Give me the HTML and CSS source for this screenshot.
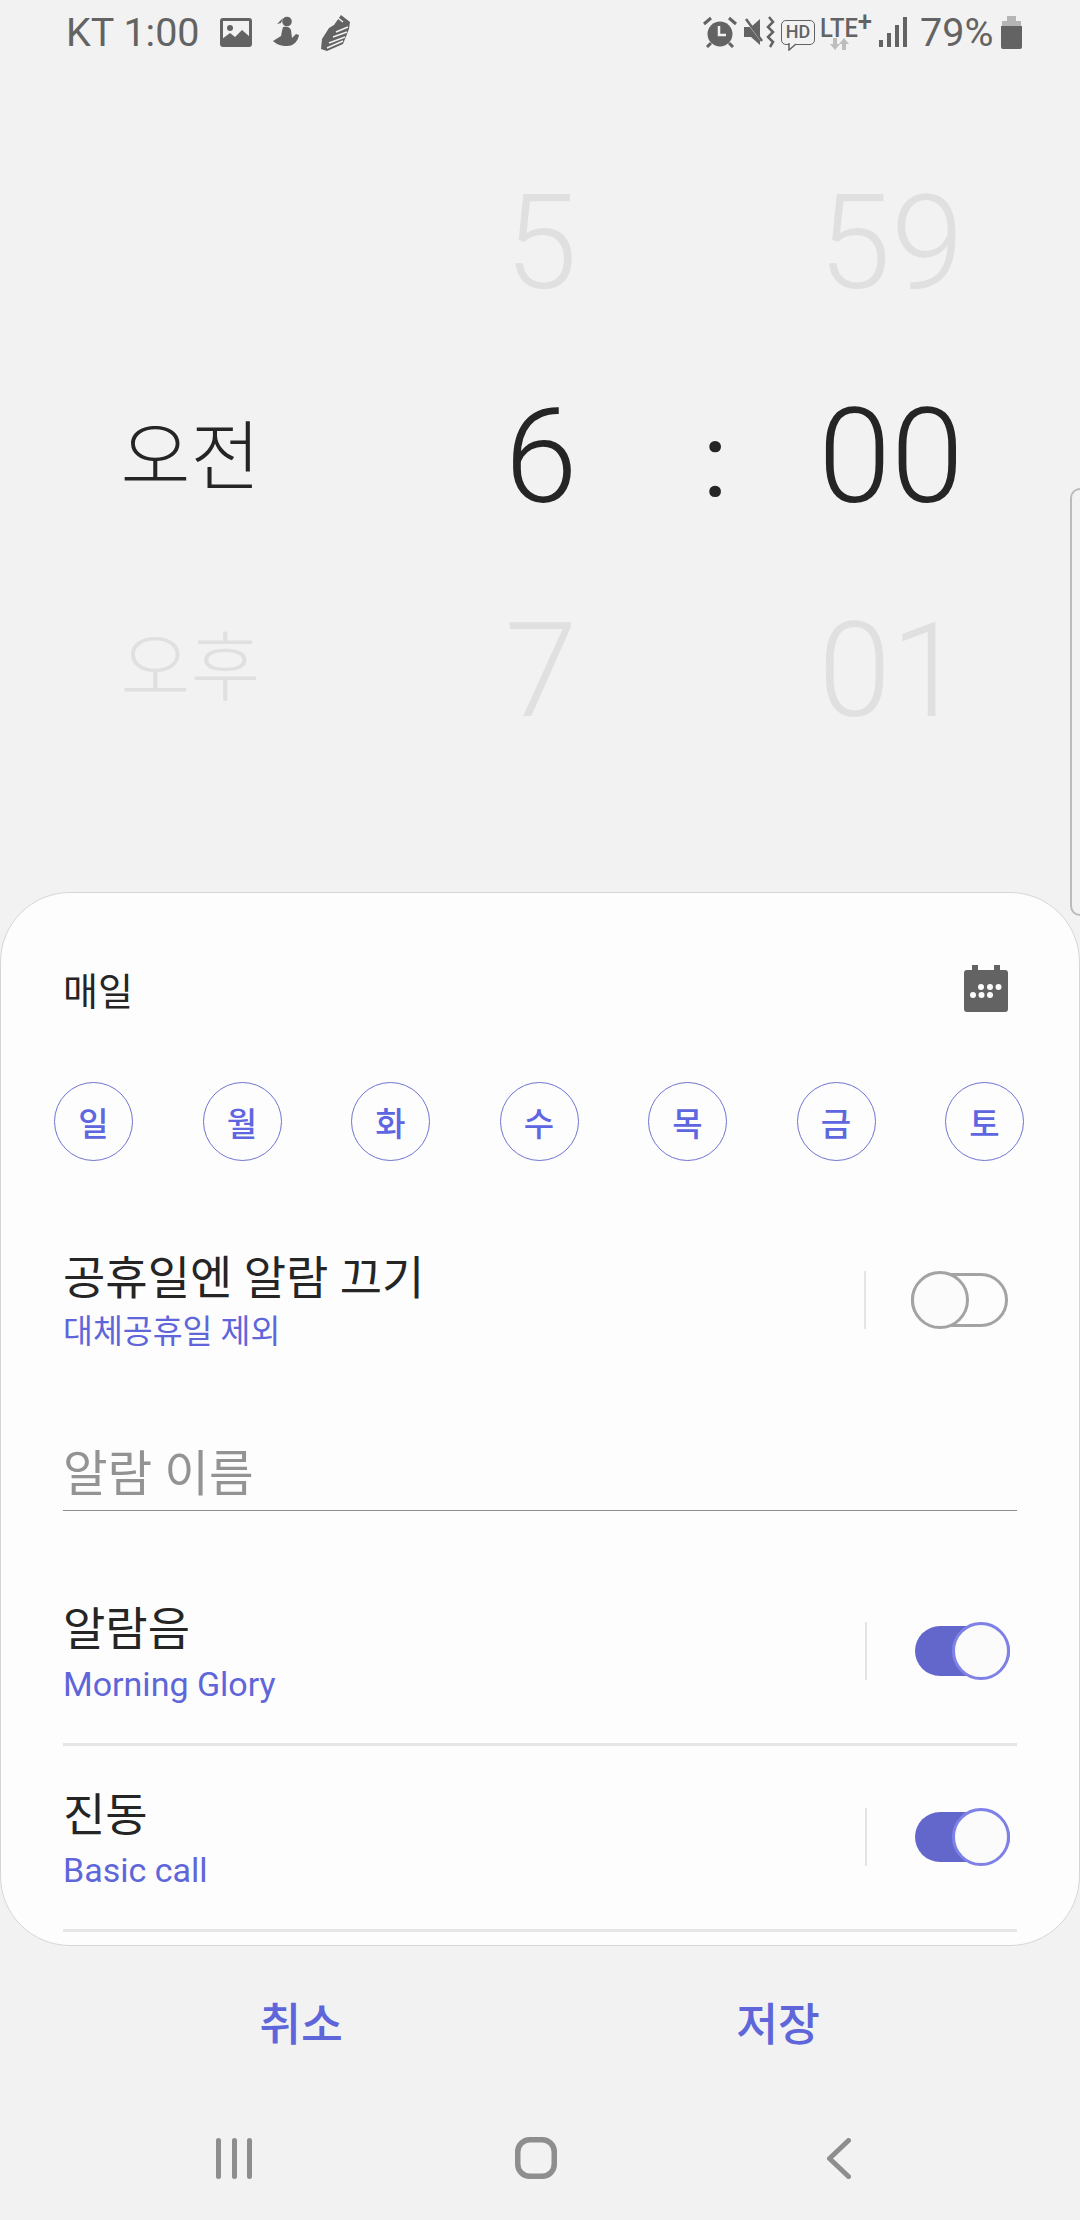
FILE: index.html
```html
<!doctype html>
<html lang="ko">
<head>
<meta charset="utf-8">
<meta name="viewport" content="width=device-width, initial-scale=1.0">
<link rel="stylesheet" href="styles.css">
<title>알람 편집</title>
</head>
<body>
<div class="screen">

<div class="status">
  <span class="status-time">KT 1:00</span>
  <svg class="ic-image" viewBox="0 0 32 29"><rect x="1.5" y="1.5" width="29" height="26" rx="1.5" fill="none" stroke="#636363" stroke-width="3"/><circle cx="10" cy="10" r="3" fill="#636363"/><path d="M2 27V21L10 15L15 19L22 12L30 19V27Z" fill="#636363"/></svg>
  <svg class="ic-person" viewBox="0 0 27 32"><circle cx="14" cy="5.500" r="4.800" fill="#636363"/><path d="M10 2L4 8L8 7Z" fill="#636363"/><path d="M10 11C14 10 17 11 18 14L19 22L23 18L26 19C25 25 21 30 14 30C8 30 3 28 0 25L8 20L9 15Z" fill="#636363"/></svg>
  <svg class="ic-shoe" viewBox="0 0 30 37"><path d="M20 1L29 8L28 15L22 30L6 37L0 35L1 25L8 14L13 11Z" fill="#636363"/><path d="M27 13L15 18M26 18L12 23M24 23L8 29M22 27L6 34M17 4L22 8" stroke="#f2f2f2" stroke-width="1.500" fill="none"/></svg>
  <span class="status-gap"></span>
  <svg class="ic-alarm" viewBox="0 0 34 32"><circle cx="17" cy="18" r="12.500" fill="#636363"/><path d="M16 10V19H23" stroke="#f2f2f2" stroke-width="2.500" fill="none"/><path d="M1 8L8 2M33 8L26 2" stroke="#636363" stroke-width="3"/><path d="M8 27L4 31M26 27L30 31" stroke="#636363" stroke-width="3"/></svg>
  <svg class="ic-mute" viewBox="0 0 32 32"><path d="M1 11H8L17 3V29L8 21H1Z" fill="#636363"/><path d="M2 3L20 27" stroke="#f2f2f2" stroke-width="2"/><path d="M3 3L19 25" stroke="#636363" stroke-width="2.500"/><path d="M26 1L30 6L25 11L30 16L25 21L30 26L27 31" stroke="#636363" stroke-width="2.500" fill="none"/></svg>
  <span class="hd-badge"><span class="hd-text">HD</span><svg class="hd-tail" viewBox="0 0 12 8"><path d="M1 0V7L8 1" fill="#f2f2f2" stroke="#636363" stroke-width="1.500"/></svg></span>
  <span class="lte">
    <span class="lte-text">LTE<span class="lte-plus">+</span></span>
    <svg class="lte-arrows" viewBox="0 0 20 14"><path d="M6 13L1 7H4V1H8V7H11Z M15 1L20 7H17V13H13V7H10Z" fill="#bdbdbd"/></svg>
  </span>
  <svg class="ic-signal" viewBox="0 0 28 30"><rect x="0" y="23" width="4" height="7" fill="#636363"/><rect x="8" y="16" width="4" height="14" fill="#636363"/><rect x="16" y="8" width="4" height="22" fill="#636363"/><rect x="24" y="0" width="4" height="30" fill="#636363"/></svg>
  <span class="status-batt">79%</span>
  <svg class="ic-battery" viewBox="0 0 21 33"><path d="M6 0H15V5H6Z" fill="#b5b5b5"/><path d="M1 5H20V10H1Z" fill="#b5b5b5"/><path d="M0 10H21V31Q21 33 19 33H2Q0 33 0 31Z" fill="#636363"/></svg>
</div>

<div class="picker">
  <div class="cell cell-ampm faint"></div>
  <div class="cell digit faint">5</div>
  <div class="cell"></div>
  <div class="cell digit faint">59</div>

  <div class="cell cell-ampm">오전</div>
  <div class="cell digit">6</div>
  <div class="cell colon">:</div>
  <div class="cell digit">00</div>

  <div class="cell cell-ampm cell-pm faint">오후</div>
  <div class="cell digit faint">7</div>
  <div class="cell"></div>
  <div class="cell digit faint">01</div>
</div>

<div class="edge-handle"></div>

<div class="card">
  <div class="card-head">
    <span class="card-date">매일</span>
    <svg class="ic-cal" viewBox="0 0 44 47"><path d="M8 0H14V5H30V0H36V5H41Q44 5 44 8V44Q44 47 41 47H3Q0 47 0 44V8Q0 5 3 5H8Z" fill="#636363"/><g fill="#fdfdfd"><circle cx="17" cy="22" r="3"/><circle cx="26" cy="22" r="3"/><circle cx="34.500" cy="22" r="3"/><circle cx="9" cy="30" r="3"/><circle cx="17.500" cy="30" r="3"/><circle cx="26" cy="30" r="3"/></g></svg>
  </div>

  <div class="days">
    <span class="day">일</span>
    <span class="day">월</span>
    <span class="day">화</span>
    <span class="day">수</span>
    <span class="day">목</span>
    <span class="day">금</span>
    <span class="day">토</span>
  </div>

  <div class="row row-holiday">
    <div class="row-text">
      <div class="row-title">공휴일엔 알람 끄기</div>
      <div class="row-sub row-sub-ko">대체공휴일 제외</div>
    </div>
    <span class="row-divider"></span>
    <span class="switch switch-off"><span class="knob"></span></span>
  </div>

  <div class="name-field">알람 이름</div>

  <div class="row row-sound">
    <div class="row-text">
      <div class="row-title">알람음</div>
      <div class="row-sub">Morning Glory</div>
    </div>
    <span class="row-divider"></span>
    <span class="switch switch-on"><span class="knob"></span></span>
  </div>

  <div class="row row-vibe">
    <div class="row-text">
      <div class="row-title">진동</div>
      <div class="row-sub">Basic call</div>
    </div>
    <span class="row-divider"></span>
    <span class="switch switch-on"><span class="knob"></span></span>
  </div>
</div>

<div class="actions">
  <span class="action">취소</span>
  <span class="action">저장</span>
</div>

<div class="nav">
  <svg class="nav-recent" viewBox="0 0 36 41"><path d="M2.500 2.500V38.500M18.500 2.500V38.500M33.500 2.500V38.500" stroke="#8e8e8e" stroke-width="5" stroke-linecap="round"/></svg>
  <svg class="nav-home" viewBox="0 0 42 42"><rect x="2.750" y="2.750" width="36.500" height="36.500" rx="12" fill="none" stroke="#8e8e8e" stroke-width="5.500"/></svg>
  <svg class="nav-back" viewBox="0 0 24 41"><path d="M21.500 2.500L2.500 20.500L21.500 38.500" fill="none" stroke="#8e8e8e" stroke-width="5" stroke-linecap="round" stroke-linejoin="round"/></svg>
</div>

</div>
</body>
</html>
```

FILE: styles.css
```css
* {
    box-sizing: border-box;
}
html, body {
    margin: 0;
    padding: 0;
}
body {
    font-family: Roboto, "Noto Sans CJK KR", sans-serif;
    background-color: #f2f2f2;
    color: #252525;
}
svg {
    display: block;
    flex: none;
}
.screen {
    position: relative;
    width: 1080px;
    height: 2220px;
    overflow: hidden;
}

/* status bar */
.status {
    display: flex;
    align-items: center;
    height: 64px;
    padding: 0 58px 0 66px;
    color: #636363;
}
.status-time {
    font-size: 39.500px;
    width: 154px;
    white-space: nowrap;
}
.status-gap {
    flex: 1;
}
.ic-image {
    width: 32px;
    height: 29px;
}
.ic-person {
    width: 27px;
    height: 32px;
    margin-left: 21px;
}
.ic-shoe {
    width: 30px;
    height: 37px;
    margin-left: 21px;
}
.ic-alarm {
    width: 34px;
    height: 32px;
}
.ic-mute {
    width: 32px;
    height: 32px;
    margin-left: 6px;
}
.hd-badge {
    position: relative;
    margin-left: 6px;
    width: 34px;
    height: 25px;
    border: 1.5px solid #636363;
    border-radius: 5px;
    display: flex;
    align-items: center;
    justify-content: center;
}
.hd-text {
    font-size: 18px;
    font-weight: 500;
    line-height: 1;
}
.hd-tail {
    position: absolute;
    left: 6px;
    bottom: -7px;
    width: 12px;
    height: 8px;
}
.lte {
    display: flex;
    flex-direction: column;
    margin-left: 5px;
    width: 52px;
    height: 46px;
}
.lte-text {
    font-size: 25px;
    font-weight: 500;
    line-height: 26px;
    height: 28px;
    transform: scaleX(0.95);
    transform-origin: left;
    white-space: nowrap;
}
.lte-plus {
    font-size: 27px;
    vertical-align: 6px;
}
.lte-arrows {
    width: 20px;
    height: 14px;
    margin-left: 9px;
}
.ic-signal {
    width: 28px;
    height: 30px;
    margin-left: 7px;
}
.status-batt {
    font-size: 39.500px;
    margin-left: 13px;
    width: 81px;
    white-space: nowrap;
}
.ic-battery {
    width: 21px;
    height: 33px;
}

/* time wheel */
.picker {
    display: grid;
    grid-template-columns: 376px 328px 22px 328px;
    grid-auto-rows: 214px;
    height: 828px;
    padding-top: 72px;
}
.cell {
    display: flex;
    align-items: center;
    justify-content: center;
    white-space: nowrap;
}
.cell-ampm {
    font-size: 76px;
    font-weight: 300;
    padding-bottom: 13px;
    padding-left: 5px;
}
.cell-pm {
    padding-bottom: 18px;
}
.digit {
    font-size: 131px;
    font-weight: 300;
    padding-left: 2px;
}
.colon {
    font-size: 104px;
    font-weight: 400;
    padding-top: 6px;
}
.faint {
    color: #e0e0e0;
}
.edge-handle {
    position: absolute;
    right: -12px;
    top: 488px;
    width: 22px;
    height: 428px;
    border: 2px solid #bcbcbc;
    border-radius: 10px;
}

/* card */
.card {
    position: relative;
    height: 1054px;
    background-color: #fdfdfd;
    border: 1.5px solid #d6d6d6;
    border-radius: 70px;
    padding: 0 62px;
}
.card-head {
    display: flex;
    align-items: center;
    justify-content: space-between;
    height: 60px;
    margin-top: 65px;
    padding-right: 9px;
}
.card-date {
    font-size: 38px;
}
.ic-cal {
    width: 44px;
    height: 47px;
}
.days {
    display: flex;
    justify-content: space-between;
    margin: 64px -7px 0 -9px;
}
.day {
    display: flex;
    align-items: center;
    justify-content: center;
    width: 79px;
    height: 79px;
    border: 1.5px solid #6f74d2;
    border-radius: 50%;
    font-size: 33px;
    font-weight: 500;
    color: #5e66e0;
}

.row {
    display: flex;
    align-items: flex-start;
}
.row-holiday {
    margin-top: 87px;
}
.row-sound {
    margin-top: 88px;
    height: 147px;
    border-bottom: 3px solid #e6e6e6;
}
.row-vibe {
    margin-top: 39px;
    height: 147px;
    border-bottom: 3px solid #e6e6e6;
}
.row-text {
    flex: 1;
}
.row-title {
    font-size: 46px;
    line-height: 60px;
}
.row-sub {
    font-size: 34px;
    line-height: 50px;
    color: #5e66d9;
}
.row-sub-ko {
    font-size: 32.500px;
    line-height: 48px;
}
.row-divider {
    width: 2px;
    height: 58px;
    margin-top: 23px;
    background-color: #e4e4e4;
}

.switch {
    position: relative;
    display: block;
    border-radius: 30px;
}
.knob {
    position: absolute;
    top: 0;
    width: 58px;
    height: 58px;
    background-color: #fbfbfb;
    border-radius: 50%;
}
.switch-off {
    width: 97px;
    height: 54px;
    margin: 25px 9px 0 45px;
    border: 3px solid #a3a3a3;
}
.switch-off .knob {
    top: -5px;
    left: -3px;
    border: 3px solid #a3a3a3;
}
.switch-on {
    width: 95px;
    height: 50px;
    margin: 27px 7px 0 48px;
    background-color: #6367cc;
}
.switch-on .knob {
    top: -4px;
    right: 0;
    border: 3px solid #7e82e6;
}

.name-field {
    margin-top: 90px;
    height: 65px;
    font-size: 48.500px;
    line-height: 58px;
    color: #939393;
    border-bottom: 1.5px solid #8f8f8f;
}

/* buttons under card */
.actions {
    display: grid;
    grid-template-columns: 602px 352px;
    height: 150px;
}
.action {
    display: flex;
    align-items: center;
    justify-content: center;
    font-size: 45.500px;
    font-weight: 500;
    color: #5e66d9;
}

.nav {
    display: flex;
    align-items: center;
    height: 124px;
    padding: 0 0 0 216px;
}
.nav-recent {
    width: 36px;
    height: 41px;
}
.nav-home {
    width: 42px;
    height: 42px;
    margin-left: 263px;
}
.nav-back {
    width: 24px;
    height: 41px;
    margin-left: 270px;
}
```
